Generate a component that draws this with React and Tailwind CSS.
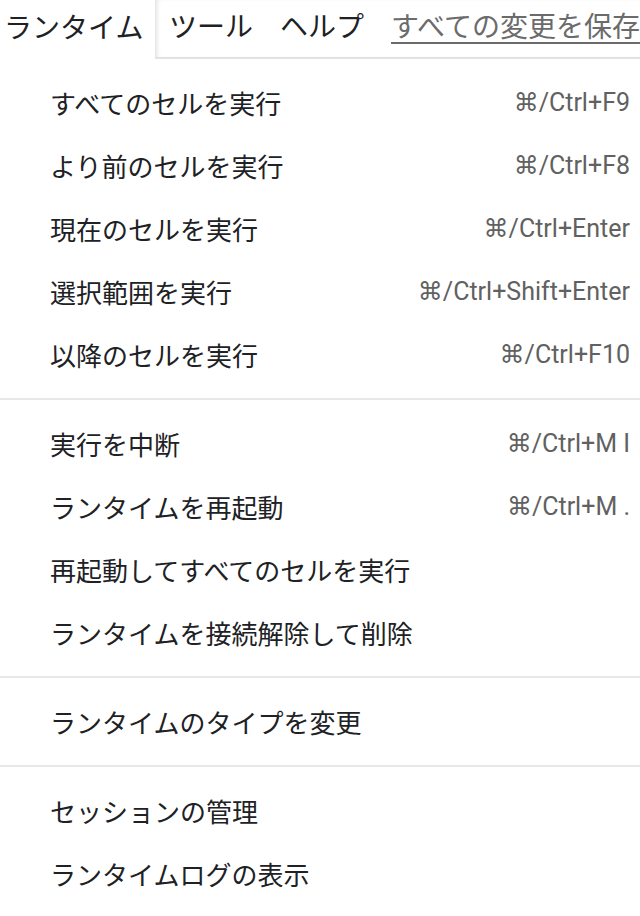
import React from "react";

const groups = [
  [
    ["すべてのセルを実行", "⌘/Ctrl+F9"],
    ["より前のセルを実行", "⌘/Ctrl+F8"],
    ["現在のセルを実行", "⌘/Ctrl+Enter"],
    ["選択範囲を実行", "⌘/Ctrl+Shift+Enter"],
    ["以降のセルを実行", "⌘/Ctrl+F10"],
  ],
  [
    ["実行を中断", "⌘/Ctrl+M I"],
    ["ランタイムを再起動", "⌘/Ctrl+M ."],
    ["再起動してすべてのセルを実行", ""],
    ["ランタイムを接続解除して削除", ""],
  ],
  [["ランタイムのタイプを変更", ""]],
  [
    ["セッションの管理", ""],
    ["ランタイムログの表示", ""],
  ],
];

const jp = "font-['Noto_Sans_CJK_JP','Noto_Sans',sans-serif]";

const MenuItem = ({ label, shortcut }) => (
  <div className="flex h-[63px] items-center justify-between pl-[50px] pr-[10px]">
    <span className={`${jp} text-[26px] text-[#202124]`}>{label}</span>
    {shortcut && (
      <span className="font-['Roboto','DejaVu_Sans',sans-serif] text-[25px] text-[#616161]">
        {shortcut}
      </span>
    )}
  </div>
);

export default function App() {
  return (
    <div className="w-[640px] h-[916px] overflow-hidden bg-white">
      <div className={`${jp} flex h-[59px] items-center text-[28px] text-[#202124]`}>
        <div className="flex h-full w-[155px] shrink-0 items-center pb-[8px] pl-[4px] bg-white">
          ランタイム
        </div>
        <div className="flex h-full min-w-0 flex-1 items-center gap-[27px] overflow-hidden whitespace-nowrap border-b-2 border-[#e3e3e3] pb-[8px] pl-[14px] shadow-[inset_4px_0_4px_-2px_rgba(0,0,0,0.12)]">
          <span>ツール</span>
          <span>ヘルプ</span>
          <span className="text-[#6b6b6b] underline underline-offset-[5px] decoration-[2px]">
            すべての変更を保存
          </span>
        </div>
      </div>
      {groups.map((items, gi) => (
        <div key={gi}>
          {gi > 0 && <div className="h-[2px] bg-[#e8e8e8]" />}
          <div className="py-3">
            {items.map(([label, shortcut]) => (
              <MenuItem key={label} label={label} shortcut={shortcut} />
            ))}
          </div>
        </div>
      ))}
    </div>
  );
}
